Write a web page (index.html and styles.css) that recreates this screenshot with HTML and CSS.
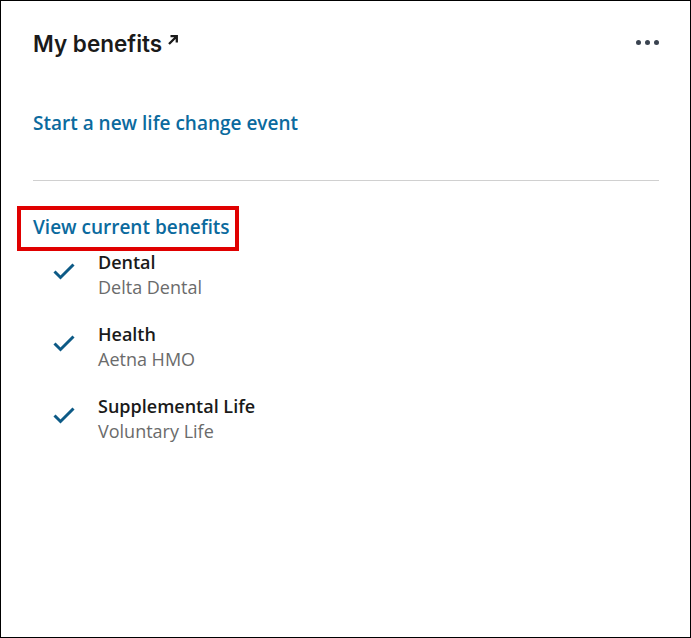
FILE: index.html
```html
<!DOCTYPE html>
<html lang="en">
<head>
<meta charset="utf-8">
<link rel="stylesheet" href="styles.css">
</head>
<body>
<div class="card">
  <div class="card-header">
    <h2 class="card-title">My benefits<svg class="ext-icon" width="10" height="10" viewBox="0 0 10 10"><path d="M1 9 L8.5 1.5 M2.5 1.2 H8.8 V7.5" fill="none" stroke="#1a1a1a" stroke-width="2.3"/></svg></h2>
    <button class="more" aria-label="More"><span></span><span></span><span></span></button>
  </div>
  <a class="link link-event" href="#">Start a new life change event</a>
  <hr class="divider">
  <a class="link link-current" href="#">View current benefits</a>
  <ul class="benefits">
    <li class="benefit">
      <svg class="check" width="22" height="18" viewBox="0 0 22 18"><path d="M1.5 9.5 L7.5 15.5 L20.5 2.5" fill="none" stroke="#0d5a86" stroke-width="3"/></svg>
      <div class="benefit-text"><div class="benefit-name">Dental</div><div class="benefit-plan">Delta Dental</div></div>
    </li>
    <li class="benefit">
      <svg class="check" width="22" height="18" viewBox="0 0 22 18"><path d="M1.5 9.5 L7.5 15.5 L20.5 2.5" fill="none" stroke="#0d5a86" stroke-width="3"/></svg>
      <div class="benefit-text"><div class="benefit-name">Health</div><div class="benefit-plan">Aetna HMO</div></div>
    </li>
    <li class="benefit">
      <svg class="check" width="22" height="18" viewBox="0 0 22 18"><path d="M1.5 9.5 L7.5 15.5 L20.5 2.5" fill="none" stroke="#0d5a86" stroke-width="3"/></svg>
      <div class="benefit-text"><div class="benefit-name">Supplemental Life</div><div class="benefit-plan">Voluntary Life</div></div>
    </li>
  </ul>
</div>
</body>
</html>
```

FILE: styles.css
```css
html, body { margin: 0; padding: 0; background: #fff; }
.card {
  box-sizing: border-box;
  width: 691px;
  height: 638px;
  border: 1px solid #000;
  padding: 26px 31px 0 32px;
  font-family: "Open Sans", sans-serif;
}
.card-header {
  display: flex;
  align-items: center;
  justify-content: space-between;
  height: 34px;
}
.card-title {
  margin: 0;
  font-family: "Inter", sans-serif;
  font-weight: 600;
  font-size: 22.5px;
  line-height: 34px;
  color: #1a1a1a;
  display: flex;
  align-items: flex-start;
  gap: 6px;
}
.ext-icon { margin-top: 8px; }
.more {
  border: 0;
  background: none;
  padding: 0;
  display: flex;
  gap: 4px;
  margin-top: -4px;
}
.more span {
  width: 5px; height: 5px; border-radius: 50%;
  background: #3a4350;
}
.link {
  display: block;
  width: fit-content;
  color: #0b6a9e;
  font-weight: 600;
  font-size: 19px;
  line-height: 26px;
  text-decoration: none;
}
.link-event { margin-top: 49px; }
.divider {
  border: 0;
  border-top: 1px solid #d0d0d0;
  margin: 44px 0 0 0;
}
.link-current {
  margin: 29px 0 0 -12px;
  padding: 4px 5px 7px 12px;
  outline: 4px solid #e00000;
  outline-offset: 0;
}
.benefits { list-style: none; margin: 3px 0 0 0; padding: 0; }
.benefit {
  display: flex;
  gap: 23px;
  padding-left: 20px;
  height: 72px;
}
.check { margin-top: 12px; flex: none; }
.benefit-name { font-weight: 600; font-size: 18px; line-height: 25px; color: #1a1a1a; }
.benefit-plan { font-size: 18px; line-height: 25px; color: #6b6b6b; }
```
